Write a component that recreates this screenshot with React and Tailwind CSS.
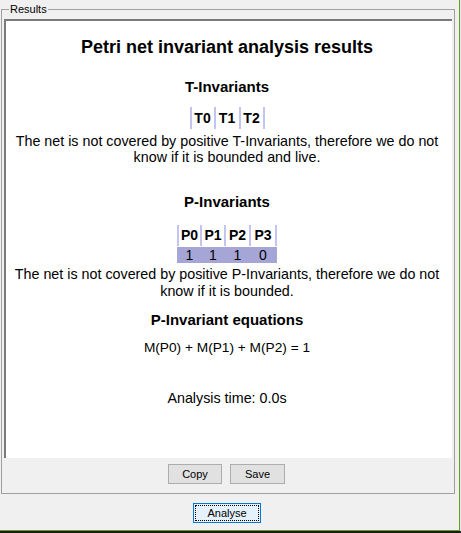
const font = { fontFamily: '"Liberation Sans", Arial, sans-serif' };

const Bar = () => <div className="w-[2px] self-stretch bg-[#c4c4f2]" />;

const TTable = () => (
  <div className="mt-[12px] flex justify-center">
    <div className="flex h-[22px] items-center">
      <Bar />
      <div className="w-[22px] text-center text-[14px] font-bold leading-[22px]">T0</div>
      <Bar />
      <div className="w-[23px] text-center text-[14px] font-bold leading-[22px]">T1</div>
      <Bar />
      <div className="w-[22px] text-center text-[14px] font-bold leading-[22px]">T2</div>
      <Bar />
    </div>
  </div>
);

const PTable = () => {
  const cols = [
    { h: "P0", v: "1", w: "w-[21px]" },
    { h: "P1", v: "1", w: "w-[22px]" },
    { h: "P2", v: "1", w: "w-[23px]" },
    { h: "P3", v: "0", w: "w-[24px]" },
  ];
  return (
    <div className="mt-[15px] flex flex-col items-center">
      <div className="flex h-[21px]">
        <Bar />
        {cols.map((c) => (
          <div key={c.h} className="flex">
            <div className={`${c.w} text-center text-[14px] font-bold leading-[21px]`}>{c.h}</div>
            <Bar />
          </div>
        ))}
      </div>
      <div className="mt-[1px] flex h-[16px] bg-[#a6a6d6]">
        <div className="w-[2px]" />
        {cols.map((c) => (
          <div key={c.h} className="flex">
            <div className={`${c.w} text-center text-[14px] leading-[16px]`}>{c.v}</div>
            <div className="w-[2px]" />
          </div>
        ))}
      </div>
    </div>
  );
};

export default function App() {
  return (
    <div className="h-[533px] w-[461px] bg-[#1c1c1c]" style={font}>
      <div className="flex h-[531px] w-[461px] bg-[#e9e9e9]">
        <div className="h-[531px] w-[460px] border-r border-b border-[#62a01c] bg-[#f0f0f0] pt-[3px] pl-[1px]">
          {/* Results group */}
          <fieldset className="h-[491px] w-[454px] border border-[#a0a0a0] pl-[2px] pr-[1px]">
            <legend className="ml-[5px] px-[1px] text-[11px] leading-[13px] text-black">Results</legend>
            <div className="mt-[3px] h-[439px] w-[448px] border-t-2 border-l-2 border-[#7a7a7a] bg-white pr-[4px] text-center text-black">
              <div className="pt-[15px] text-[18px] font-bold leading-[22px]">
                Petri net invariant analysis results
              </div>

              <div className="mt-[21px] text-[15px] font-bold leading-[16px]">T-Invariants</div>
              <TTable />
              <div className="mt-[4px] text-[14.3px] leading-[16px]">
                The net is not covered by positive T-Invariants, therefore we do not
                <br />
                know if it is bounded and live.
              </div>

              <div className="mt-[29px] text-[15px] font-bold leading-[16px]">P-Invariants</div>
              <PTable />
              <div className="mt-[3px] text-[14.3px] leading-[17px]">
                The net is not covered by positive P-Invariants, therefore we do not
                <br />
                know if it is bounded.
              </div>

              <div className="mt-[12px] text-[15px] font-bold leading-[16px]">P-Invariant equations</div>
              <div className="mt-[12px] text-[13.7px] leading-[16px]">M(P0) + M(P1) + M(P2) = 1</div>

              <div className="mt-[34px] text-[14.3px] leading-[16px]">Analysis time: 0.0s</div>
            </div>

            <div className="mt-[6px] flex justify-center gap-[8px] pr-[4px]">
              <button className="h-[20px] w-[54px] border border-[#adadad] bg-[#e1e1e1] text-[11px] text-black">
                Copy
              </button>
              <button className="h-[20px] w-[55px] border border-[#adadad] bg-[#e1e1e1] text-[11px] text-black">
                Save
              </button>
            </div>
          </fieldset>

          <div className="mt-[9px] flex justify-center pr-[6px]">
            <button className="h-[20px] w-[68px] border border-[#0078d7] bg-[#e5f1fb] p-[1px]">
              <div className="flex h-full w-full items-center justify-center border border-dotted border-black text-[11px] text-black">
                Analyse
              </div>
            </button>
          </div>
        </div>
      </div>
    </div>
  );
}
